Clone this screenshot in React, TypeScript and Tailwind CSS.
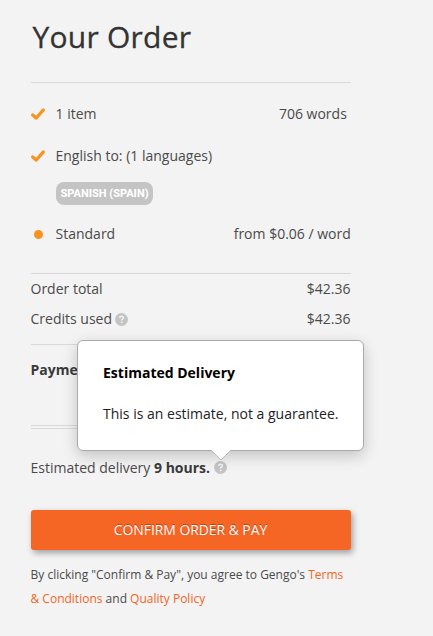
import type { ReactNode } from "react";

function CheckMark() {
  return (
    <svg className="-mt-px" width="14" height="12" viewBox="0 0 14 12" fill="none">
      <path
        d="M1.7 6.9 5.2 10 12.2 2.1"
        stroke="#f7941e"
        strokeWidth="3.3"
        strokeLinecap="round"
        strokeLinejoin="round"
      />
    </svg>
  );
}

function Dot() {
  return <span className="ml-[3px] block size-[9px] rounded-full bg-[#f7941e]" />;
}

function HelpIcon() {
  return (
    <svg className="block" width="13" height="13" viewBox="0 0 13 13" fill="none">
      <circle cx="6.5" cy="6.5" r="6.5" fill="#c4c4c4" />
      <path
        d="M4.7 5C4.7 3.8 5.5 3.2 6.5 3.2S8.4 3.8 8.4 4.8C8.4 6.1 6.6 6.1 6.6 7.6"
        stroke="#f3f3f3"
        strokeWidth="1.5"
      />
      <path d="M5.8 8.6h1.6v1.5H5.8z" fill="#f3f3f3" />
    </svg>
  );
}

type OrderRowProps = {
  icon: ReactNode;
  label: string;
  value?: string;
  className?: string;
};

function OrderRow({ icon, label, value, className = "" }: OrderRowProps) {
  return (
    <div className={`flex h-5 items-center ${className}`}>
      <span className="w-[24.5px] shrink-0">{icon}</span>
      <span className="flex-1">{label}</span>
      {value && <span className="mr-[0.2px]">{value}</span>}
    </div>
  );
}

function DeliveryTooltip() {
  return (
    <div className="absolute bottom-[23px] left-[-137px] h-[111px] w-[287px] rounded-md border border-[#aaa] bg-white px-[25.5px] pt-[22px] text-black shadow-[0_5px_15px_rgba(0,0,0,0.2)]">
      <p className="leading-5 font-bold">Estimated Delivery</p>
      <p className="mt-[21px] leading-5 whitespace-nowrap text-[#222]">
        This is an estimate, not a guarantee.
      </p>
      <svg
        className="absolute top-[108px] left-[132px]"
        width="22"
        height="12"
        viewBox="0 0 22 12"
      >
        <path d="M0 0H22L21 1 11 11 1 1Z" fill="#fff" />
        <path d="M1 1 11 11 21 1" fill="none" stroke="#bbb" />
      </svg>
    </div>
  );
}

export default function App() {
  return (
    <div className="h-[636px] overflow-hidden bg-[#f3f3f3] pl-[31px] font-['Open_Sans',sans-serif] text-sm text-[#4a4a4a]">
      <div className="w-80">
        <h1 className="h-[82px] pt-[17px] pl-[1.5px] text-[30px] leading-10 font-medium tracking-[0.25px] text-[#333] [-webkit-text-stroke:0.3px_#333]">
          Your Order
        </h1>

        <section className="h-[191px] border-t border-[#d9d9d9] pt-[21px]">
          <OrderRow className="pr-1" icon={<CheckMark />} label="1 item" value="706 words" />
          <OrderRow className="mt-[22px]" icon={<CheckMark />} label="English to: (1 languages)" />
          <div className="mt-4 ml-[25px] flex h-[23px] w-[97px] items-center justify-center rounded-lg bg-[#c4c4c4] font-[Roboto,sans-serif] text-[11px] font-extrabold whitespace-nowrap text-white">
            SPANISH (SPAIN)
          </div>
          <OrderRow className="mt-[19px]" icon={<Dot />} label="Standard" value="from $0.06 / word" />
        </section>

        <section className="h-[71px] border-t border-[#d9d9d9] pt-[5px]">
          <div className="-ml-[0.5px] flex h-5 items-center justify-between pr-[0.5px]">
            <span>Order total</span>
            <span>$42.36</span>
          </div>
          <div className="mt-2.5 -ml-[0.5px] flex h-5 items-center justify-between pr-[0.5px]">
            <span className="flex items-center gap-[3px]">
              Credits used
              <HelpIcon />
            </span>
            <span>$42.36</span>
          </div>
        </section>

        <section className="h-[81px] border-t border-[#d9d9d9] pt-[15px]">
          <p className="-ml-[0.5px] leading-5 font-bold text-[#3a3a3a]">Payment</p>
        </section>

        <section className="h-[85px] border-t-4 border-double border-[#d9d9d9] pt-7">
          <div className="-ml-[0.5px] flex h-5 items-center">
            <span className="pt-px">
              Estimated delivery <b className="text-[#3a3a3a]">9 hours.</b>
            </span>
            <span className="relative ml-[3.5px]">
              <HelpIcon />
              <DeliveryTooltip />
            </span>
          </div>
        </section>

        <button className="block h-10 w-full rounded-[3px] bg-[#f56523] pr-px font-medium tracking-[-0.08px] text-white shadow-[2px_3px_6px_rgba(0,0,0,0.35)] [text-shadow:0_-1px_0_rgba(0,0,0,0.3)]">
          CONFIRM ORDER &amp; PAY
        </button>

        <p className="mt-[13px] -ml-[0.5px] text-xs leading-6 whitespace-nowrap">
          By clicking "Confirm &amp; Pay", you agree to Gengo's{" "}
          <a className="text-[#f56523]">
            Terms
            <br />
            &amp; Conditions
          </a>{" "}
          and <a className="text-[#f56523]">Quality Policy</a>
        </p>
      </div>
    </div>
  );
}
